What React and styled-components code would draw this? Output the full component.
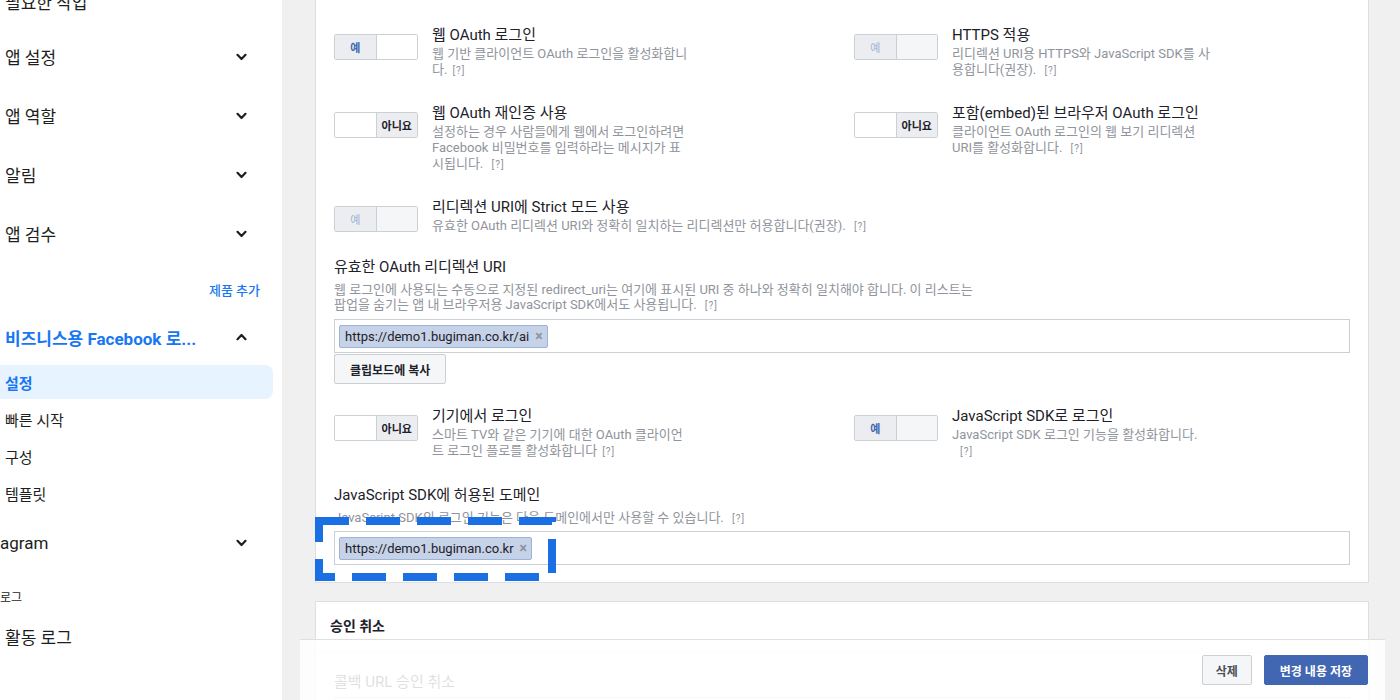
import React from 'react';
import styled, {createGlobalStyle} from 'styled-components';

const GlobalStyle = createGlobalStyle`
html, body {
  margin:0;
  padding:0;
  height:100%;
  overflow:hidden;
}
body{
  font-family: Roboto, "Noto Sans CJK KR", sans-serif;
  background:#f0f0f0;
  color:#1d2129;
}
`

const Page = styled.div`
display:flex;
height:700px;
overflow:hidden;
`

const Sidebar = styled.nav`
width:282px;
flex:none;
background:#fff;
overflow:hidden;
`

const SideList = styled.div`
display:flex;
flex-direction:column;
margin-top:-25px;
`

const NavItem = styled.div`
height:${props=>props.$h || 59}px;
display:flex;
align-items:center;
justify-content:space-between;
padding:0 35px 0 ${props=>props.$pl ?? 5}px;
font-size:17px;
color:${props=>props.$active ? '#1877f2' : '#1c1e21'};
font-weight:${props=>props.$active ? 'bold' : 'normal'};
white-space:nowrap;
`

const AddProduct = styled.div`
height:52px;
display:flex;
align-items:center;
justify-content:flex-end;
padding-right:22px;
font-size:13px;
font-weight:500;
color:#1877f2;
`

const SubList = styled.div`
display:flex;
flex-direction:column;
gap:3px;
margin:6px 0 3px;
`

const SubItem = styled.div`
height:34px;
display:flex;
align-items:center;
margin-right:9px;
padding-left:5px;
border-radius:0 8px 8px 0;
font-size:15px;
background:${props=>props.$selected ? '#e7f3ff' : 'transparent'};
color:${props=>props.$selected ? '#1877f2' : '#1c1e21'};
font-weight:${props=>props.$selected ? 'bold' : 'normal'};
`

const SectionLabel = styled.div`
height:49px;
display:flex;
align-items:center;
font-size:12px;
color:#1c1e21;
`

const Main = styled.main`
flex:1;
padding:0 31px 0 33px;
overflow:hidden;
`

const Card = styled.section`
background:#fff;
border:1px solid #dddfe2;
margin-top:${props=>props.$mt || 0}px;
`

const CardBody = styled.div`
padding:34px 18px 17px;
`

const SettingsGrid = styled.div`
display:grid;
grid-template-columns:520px 1fr;
row-gap:25px;
margin-top:${props=>props.$mt || 0}px;
`

const SettingRow = styled.div`
display:flex;
align-items:flex-start;
gap:14px;
`

const SettingText = styled.div`
display:flex;
flex-direction:column;
`

const Title = styled.div`
font-size:15px;
line-height:18px;
color:#1d2129;
white-space:nowrap;
`

const Desc = styled.div`
font-size:13px;
line-height:${props=>props.$lh || 16}px;
color:#90949c;
margin-top:${props=>props.$mt || 2}px;
white-space:nowrap;
`

const Help = styled.span`
font-size:10px;
margin-left:${props=>props.$ml ?? 5}px;
letter-spacing:1px;
color:#90949c;
`

const ToggleBox = styled.div`
display:flex;
width:84px;
height:26px;
box-sizing:border-box;
border:1px solid #ccd0d5;
border-radius:2px;
overflow:hidden;
flex:none;
margin-top:8px;
`

const ToggleHalf = styled.div`
flex:1;
display:flex;
align-items:center;
justify-content:center;
font-size:11px;
font-weight:${props=>props.$faded ? 'normal' : 'bold'};
background:${props=>props.$bg};
color:${props=>props.$color};
& + &{
  border-left:1px solid #ccd0d5;
}
`

const Toggle = ({value, disabled, rightMuted}) => {
    if (value === 'no') {
        return (
            <ToggleBox>
                <ToggleHalf $bg="#fff" />
                <ToggleHalf $bg="#ebedf0" $color="#1d2129">아니요</ToggleHalf>
            </ToggleBox>
        )
    }
    return (
        <ToggleBox>
            <ToggleHalf $bg="#ebedf0" $color={disabled ? '#9cb4d8' : '#4267b2'} $faded={disabled}>예</ToggleHalf>
            <ToggleHalf $bg={disabled || rightMuted ? '#f5f6f7' : '#fff'} />
        </ToggleBox>
    )
}

const Setting = ({toggle, title, lines, helpBreak}) => (
    <SettingRow>
        {toggle}
        <SettingText>
            <Title>{title}</Title>
            <Desc>
                {lines.map((l, i) => (
                    <div key={i}>{l}{i === lines.length - 1 && !helpBreak && <Help>[?]</Help>}</div>
                ))}
                {helpBreak && <div><Help $ml={8}>[?]</Help></div>}
            </Desc>
        </SettingText>
    </SettingRow>
)

const Field = styled.div`
margin-top:${props=>props.$mt || 0}px;
`

const TagInput = styled.div`
height:34px;
box-sizing:border-box;
border:1px solid #ccd0d5;
padding:0 4px;
display:flex;
align-items:center;
margin-top:${props=>props.$mt ?? 6}px;
background:#fff;
`

const Tag = styled.span`
display:inline-flex;
align-items:center;
gap:6px;
height:23px;
box-sizing:border-box;
padding:0 4px 0 5px;
background:#c5d2e7;
border:1px solid #9cb4d8;
border-radius:2px;
font-size:13px;
color:#1d2129;
`

const TagX = styled.span`
font-size:14px;
font-weight:bold;
color:#8d949e;
line-height:1;
`

const Button = styled.button`
height:30px;
box-sizing:border-box;
padding:0 ${props=>props.$px || 12}px;
border:1px solid ${props=>props.$primary ? '#4267b2' : '#ccd0d5'};
border-radius:2px;
background:${props=>props.$primary ? '#4267b2' : '#f5f6f7'};
color:${props=>props.$primary ? '#fff' : '#4b4f56'};
font-family:inherit;
font-size:12px;
font-weight:bold;
`

const CopyButton = styled(Button)`
display:block;
margin-top:1px;
color:#1d2129;
`

const CardHeader = styled.div`
height:51px;
box-sizing:border-box;
padding:15px 0 0 14px;
border-bottom:1px solid #e9ebee;
font-size:14px;
line-height:18px;
font-weight:bold;
color:#1d2129;
`

const CardSection = styled.div`
padding:20px 18px 0;
`

const EmptyInput = styled.div`
height:34px;
border:1px solid #ccd0d5;
margin-top:6px;
`

const SaveBar = styled.div`
position:fixed;
left:300px;
right:15px;
bottom:0;
height:61px;
box-sizing:border-box;
background:rgba(255,255,255,0.86);
border-top:1px solid #dddfe2;
display:flex;
justify-content:flex-end;
align-items:flex-start;
gap:12px;
padding:15px 17px 0 0;
`

const Highlight = styled.svg`
position:fixed;
left:315px;
top:517px;
pointer-events:none;
`

const Chevron = ({up}) => (
    <svg width="11" height="8" viewBox="0 0 11 8">
        <path d={up ? "M1.5 6.2 L5.5 2 L9.5 6.2" : "M1.5 1.8 L5.5 6 L9.5 1.8"} fill="none" stroke="#1c1e21" strokeWidth="2.2" strokeLinecap="round" strokeLinejoin="round"/>
    </svg>
)

const App = () => {
    return (
        <Page>
            <GlobalStyle/>
            <Sidebar>
                <SideList>
                    <NavItem $h={52}>필요한 작업</NavItem>
                    <NavItem>앱 설정<Chevron/></NavItem>
                    <NavItem>앱 역할<Chevron/></NavItem>
                    <NavItem>알림<Chevron/></NavItem>
                    <NavItem>앱 검수<Chevron/></NavItem>
                    <AddProduct>제품 추가</AddProduct>
                    <NavItem $h={44} $active>비즈니스용 Facebook 로...<Chevron up/></NavItem>
                    <SubList>
                        <SubItem $selected>설정</SubItem>
                        <SubItem>빠른 시작</SubItem>
                        <SubItem>구성</SubItem>
                        <SubItem>템플릿</SubItem>
                    </SubList>
                    <NavItem $pl={0}>agram<Chevron/></NavItem>
                    <SectionLabel>로그</SectionLabel>
                    <NavItem $h={30}>활동 로그</NavItem>
                </SideList>
            </Sidebar>
            <Main>
                <Card $mt={-9}>
                    <CardBody>
                        <SettingsGrid>
                            <Setting toggle={<Toggle value="yes"/>} title="웹 OAuth 로그인"
                                lines={["웹 기반 클라이언트 OAuth 로그인을 활성화합니", "다."]}/>
                            <Setting toggle={<Toggle value="yes" disabled/>} title="HTTPS 적용"
                                lines={["리디렉션 URI용 HTTPS와 JavaScript SDK를 사", "용합니다(권장). "]}/>
                            <Setting toggle={<Toggle value="no"/>} title="웹 OAuth 재인증 사용"
                                lines={["설정하는 경우 사람들에게 웹에서 로그인하려면", "Facebook 비밀번호를 입력하라는 메시지가 표", "시됩니다. "]}/>
                            <Setting toggle={<Toggle value="no"/>} title="포함(embed)된 브라우저 OAuth 로그인"
                                lines={["클라이언트 OAuth 로그인의 웹 보기 리디렉션", "URI를 활성화합니다. "]}/>
                            <Setting toggle={<Toggle value="yes" disabled/>} title="리디렉션 URI에 Strict 모드 사용"
                                lines={["유효한 OAuth 리디렉션 URI와 정확히 일치하는 리디렉션만 허용합니다(권장). "]}/>
                        </SettingsGrid>

                        <Field $mt={23}>
                            <Title>유효한 OAuth 리디렉션 URI</Title>
                            <Desc $lh={15} $mt={6}>
                                <div>웹 로그인에 사용되는 수동으로 지정된 redirect_uri는 여기에 표시된 URI 중 하나와 정확히 일치해야 합니다. 이 리스트는</div>
                                <div>팝업을 숨기는 앱 내 브라우저용 JavaScript SDK에서도 사용됩니다. <Help>[?]</Help></div>
                            </Desc>
                            <TagInput>
                                <Tag>https://demo1.bugiman.co.kr/ai<TagX>×</TagX></Tag>
                            </TagInput>
                            <CopyButton $px={15}>클립보드에 복사</CopyButton>
                        </Field>

                        <SettingsGrid $mt={23}>
                            <Setting toggle={<Toggle value="no"/>} title="기기에서 로그인"
                                lines={["스마트 TV와 같은 기기에 대한 OAuth 클라이언", "트 로그인 플로를 활성화합니다"]}/>
                            <Setting toggle={<Toggle value="yes" rightMuted/>} title="JavaScript SDK로 로그인"
                                lines={["JavaScript SDK 로그인 기능을 활성화합니다."]} helpBreak/>
                        </SettingsGrid>

                        <Field $mt={26}>
                            <Title>JavaScript SDK에 허용된 도메인</Title>
                            <Desc $lh={15} $mt={6}>
                                <div>JavaScript SDK의 로그인 기능은 다음 도메인에서만 사용할 수 있습니다. <Help>[?]</Help></div>
                            </Desc>
                            <TagInput $mt={5}>
                                <Tag>https://demo1.bugiman.co.kr<TagX>×</TagX></Tag>
                            </TagInput>
                        </Field>
                    </CardBody>
                </Card>

                <Card $mt={18}>
                    <CardHeader>승인 취소</CardHeader>
                    <CardSection>
                        <Title>콜백 URL 승인 취소</Title>
                        <EmptyInput/>
                    </CardSection>
                </Card>
            </Main>

            <SaveBar>
                <Button $px={13}>삭제</Button>
                <Button $primary $px={15}>변경 내용 저장</Button>
            </SaveBar>

            <Highlight width="241" height="64" viewBox="0 0 241 64">
                <rect x="4" y="4" width="233" height="56" fill="none" stroke="#1a6fe3" strokeWidth="8" strokeDasharray="34 17" strokeDashoffset="4"/>
            </Highlight>
        </Page>
    )
};

export default App
